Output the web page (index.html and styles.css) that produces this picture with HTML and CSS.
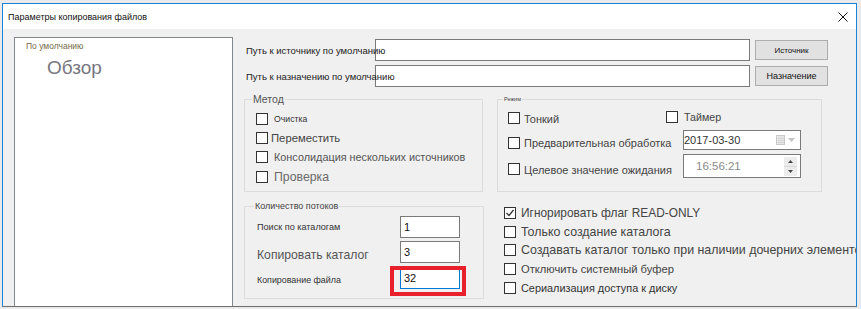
FILE: index.html
```html
<!DOCTYPE html>
<html lang="ru">
<head>
  <meta charset="UTF-8">
  <title>Параметры копирования файлов</title>
  <link rel="stylesheet" href="styles.css">
</head>
<body>
  <div class="window">
    <div class="titlebar">
      <span class="title">Параметры копирования файлов</span>
      <svg class="close" width="10" height="10" viewBox="0 0 10 10"><path d="M0.5 0.5L9.5 9.5M9.5 0.5L0.5 9.5" stroke="#111" stroke-width="1"/></svg>
    </div>

    <div class="client">
      <div class="preview">
        <div class="preview-caption">По умолчанию</div>
        <div class="preview-title">Обзор</div>
      </div>

      <div class="main">
        <div class="path-row">
          <span class="path-label">Путь к источнику по умолчанию</span>
          <div class="text-box"></div>
          <button class="btn btn-small">Источник</button>
        </div>
        <div class="path-row">
          <span class="path-label">Путь к назначению по умолчанию</span>
          <div class="text-box"></div>
          <button class="btn">Назначение</button>
        </div>

        <div class="groups">
          <div class="group method">
            <span class="legend">Метод</span>
            <div class="check">
              <span class="box"></span>
              <span class="lbl lbl-clean">Очистка</span>
            </div>
            <div class="check gap7">
              <span class="box"></span>
              <span class="lbl lbl-move">Переместить</span>
            </div>
            <div class="check gap7">
              <span class="box"></span>
              <span class="lbl lbl-merge">Консолидация нескольких источников</span>
            </div>
            <div class="check gap8">
              <span class="box"></span>
              <span class="lbl lbl-verify">Проверка</span>
            </div>
          </div>

          <div class="group mode">
            <span class="legend legend-tiny">Режим</span>
            <div class="mode-row">
              <div class="mode-item item-thin">
                <span class="box"></span>
                <span class="mlbl">Тонкий</span>
              </div>
              <div class="mode-item item-timer">
                <span class="box"></span>
                <span class="mlbl">Таймер</span>
              </div>
            </div>
            <div class="mode-row row-pre">
              <div class="mode-item item-wide">
                <span class="box"></span>
                <span class="mlbl">Предварительная обработка</span>
              </div>
              <div class="picker">
                <span>2017-03-30</span>
                <svg class="cal" width="9" height="10" viewBox="0 0 9 10">
                  <rect x="0.5" y="0.5" width="8" height="9" fill="#f4f4f4" stroke="#c8c8c8"/>
                  <path d="M1 3.5H8M1 5.5H8M1 7.5H8M3 1V9M5 1V9M7 1V9" stroke="#d6d6d6" stroke-width="1"/>
                </svg>
                <svg class="drop" width="7" height="4" viewBox="0 0 7 4"><path d="M0 0H7L3.5 4Z" fill="#c4c4c4"/></svg>
              </div>
            </div>
            <div class="mode-row row-wait">
              <div class="mode-item item-wide">
                <span class="box"></span>
                <span class="mlbl">Целевое значение ожидания</span>
              </div>
              <div class="picker picker-time">
                <span>16:56:21</span>
                <div class="spin">
                  <span class="spin-btn"><svg width="5" height="3" viewBox="0 0 5 3"><path d="M0 3H5L2.5 0Z" fill="#444"/></svg></span>
                  <span class="spin-btn"><svg width="5" height="3" viewBox="0 0 5 3"><path d="M0 0H5L2.5 3Z" fill="#444"/></svg></span>
                </div>
              </div>
            </div>
          </div>
        </div>

        <div class="bottom">
          <div class="group threads">
            <span class="legend legend-small">Количество потоков</span>
            <div class="thread-row">
              <span class="tlbl">Поиск по каталогам</span>
              <div class="num">1</div>
            </div>
            <div class="thread-row row-dir">
              <span class="tlbl tlbl-big">Копировать каталог</span>
              <div class="num">3</div>
            </div>
            <div class="thread-row row-file">
              <span class="tlbl tlbl-file">Копирование файла</span>
              <div class="num num-focus">32</div>
            </div>
          </div>

          <div class="options">
            <div class="option">
              <span class="box box-checked"><svg width="10" height="10" viewBox="0 0 10 10"><path d="M1.5 5L4 7.5L8.5 2" fill="none" stroke="#333" stroke-width="1.3"/></svg></span>
              <span class="olbl o-ignore">Игнорировать флаг READ-ONLY</span>
            </div>
            <div class="option gap7">
              <span class="box"></span>
              <span class="olbl o-only">Только создание каталога</span>
            </div>
            <div class="option gap6">
              <span class="box"></span>
              <span class="olbl o-only">Создавать каталог только при наличии дочерних элементов</span>
            </div>
            <div class="option gap7">
              <span class="box"></span>
              <span class="olbl o-buffer">Отключить системный буфер</span>
            </div>
            <div class="option gap7">
              <span class="box"></span>
              <span class="olbl o-serial">Сериализация доступа к диску</span>
            </div>
          </div>
        </div>
      </div>
    </div>
  </div>
</body>
</html>
```

FILE: styles.css
```css
body { margin: 0; background: #eaeaea; font-family: "Liberation Sans", Arial, sans-serif; color: #333; }

.window { margin: 3px 0 0 2px; width: 855px; height: 304px; box-sizing: border-box; border: 1px solid #1883d7; border-bottom-color: #6e6e6e; display: flex; flex-direction: column; overflow: hidden; background: #f0f0f0; }
.titlebar { height: 25px; flex: none; background: #fff; display: flex; align-items: center; justify-content: space-between; padding: 0 8px 0 5px; }
.title { font-size: 9px; color: #111; }
.close { display: block; }

.client { flex: 1; display: flex; align-items: flex-start; min-height: 0; }

.preview { margin: 8px 0 0 11px; width: 219px; height: 290px; box-sizing: border-box; flex: none; border: 1px solid #828790; background: #fff; padding: 3px 0 0 11px; }
.preview-caption { font-size: 8.5px; line-height: 10px; color: #74694a; }
.preview-title { margin: 6px 0 0 21px; font-size: 19px; line-height: 22px; color: #77767e; }

.main { margin-left: 11px; padding-top: 10px; width: 600px; flex: none; }

.path-row { display: flex; align-items: center; height: 22px; }
.path-row + .path-row { margin-top: 4px; }
.path-label { width: 131px; flex: none; box-sizing: border-box; padding-left: 2px; font-size: 9.5px; white-space: nowrap; color: #222; position: relative; z-index: 1; }
.text-box { width: 375px; height: 22px; flex: none; box-sizing: border-box; border: 1px solid #7a7a7a; background: #fff; }
.btn { margin-left: 5px; width: 73px; height: 20px; box-sizing: border-box; padding: 0; border: 1px solid #adadad; background: #e1e1e1; font-family: inherit; font-size: 9px; color: #111; }
.btn-small { font-size: 8px; }

.groups { display: flex; gap: 14px; margin-top: 12px; }
.group { position: relative; flex: none; height: 93px; box-sizing: border-box; border: 1px solid #dcdcdc; }
.legend { position: absolute; top: -7px; left: 7px; padding: 0 1px; background: #f0f0f0; font-size: 10.5px; line-height: 12px; color: #555; }
.legend-tiny { left: 5px; top: -5px; font-size: 5.5px; line-height: 8px; color: #444; }
.legend-small { left: 9px; top: -6px; font-size: 9px; line-height: 11px; color: #444; }

.box { display: block; width: 12px; height: 12px; box-sizing: border-box; flex: none; border: 1px solid #333; background: #fff; }
.box-checked svg { display: block; }

.method { width: 239px; padding: 13px 0 0 11px; }
.check { display: flex; align-items: center; height: 12px; }
.gap8 { margin-top: 8px; }
.gap7 { margin-top: 7px; }
.gap6 { margin-top: 6px; }
.lbl { margin-left: 6px; line-height: 12px; white-space: nowrap; }
.lbl-clean { font-size: 8.7px; color: #333; }
.lbl-move { margin-left: 3px; font-size: 11.3px; color: #444; }
.lbl-merge { font-size: 10.85px; color: #555; }
.lbl-verify { font-size: 12.3px; color: #6a6a6a; }

.mode { width: 325px; padding: 11px 0 0 10px; }
.mode-row { display: flex; align-items: flex-start; }
.row-pre, .row-wait { margin-top: 4px; }
.mode-item { display: flex; align-items: flex-start; flex: none; }
.mlbl { margin-left: 4px; font-size: 11px; line-height: 13px; color: #444; white-space: nowrap; }
.item-thin { width: 158px; }
.item-thin .box { margin-top: 1px; }
.item-thin .mlbl { padding-top: 2px; }
.item-timer .mlbl { margin-left: 6px; font-size: 10.7px; }
.item-wide { width: 175px; }
.row-pre .box { margin-top: 7px; }
.row-pre .mlbl { padding-top: 7px; }
.row-wait .box { margin-top: 9px; }
.row-wait .mlbl { padding-top: 10px; }

.picker { width: 118px; height: 20px; box-sizing: border-box; display: flex; align-items: center; border: 1px solid #7a7a7a; background: #fff; font-size: 11px; color: #333; }
.cal { margin-left: auto; display: block; }
.drop { display: block; margin: 0 5px 0 3px; }
.picker-time { height: 24px; padding-left: 12px; font-size: 11.5px; color: #8a8a8a; }
.spin { margin: 0 3px 0 auto; width: 13px; height: 19px; display: flex; flex-direction: column; gap: 1px; background: #d8d8d8; }
.spin-btn { flex: 1; display: flex; align-items: center; justify-content: center; background: #ececec; }
.spin-btn svg { display: block; }

.bottom { display: flex; margin-top: 14px; }
.threads { width: 240px; padding: 9px 0 0 12px; }
.thread-row { display: flex; align-items: center; }
.row-dir { margin-top: 3px; }
.row-file { margin-top: 4px; }
.tlbl { width: 143px; flex: none; font-size: 9.1px; color: #333; white-space: nowrap; }
.tlbl-big { padding-top: 6px; font-size: 12.2px; color: #555; }
.tlbl-file { padding-top: 4px; font-size: 8.9px; }
.num { position: relative; width: 60px; height: 22px; box-sizing: border-box; border: 1px solid #7a7a7a; background: #fff; padding-left: 3px; font-size: 11px; line-height: 20px; color: #111; }
.num-focus { border-color: #0078d7; }
.num-focus::after { content: ""; position: absolute; left: -11px; top: -2px; width: 76px; height: 30px; box-sizing: border-box; border: 4px solid #e8202c; }

.options { margin-left: 20px; padding-top: 1px; }
.option { display: flex; align-items: center; height: 12px; }
.olbl { margin-left: 5px; line-height: 12px; white-space: nowrap; color: #444; }
.o-ignore { font-size: 11.9px; }
.o-only { font-size: 12.4px; }
.o-buffer { font-size: 11.2px; }
.o-serial { font-size: 10.9px; color: #333; }
```
